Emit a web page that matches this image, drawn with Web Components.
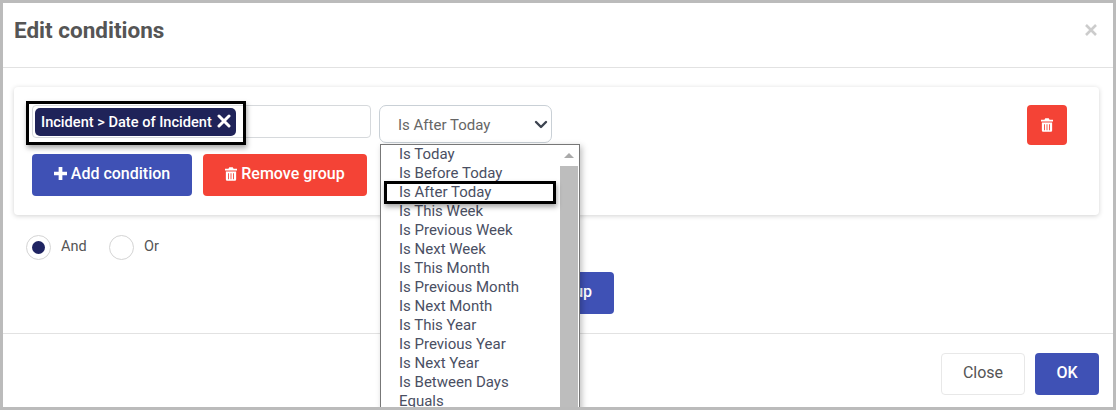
<!DOCTYPE html>
<html>
<head>
<meta charset="utf-8">
<title>Edit conditions</title>
<style>
  html, body { margin: 0; padding: 0; background: #fff; overflow: hidden; }
  body { font-family: Roboto, "Liberation Sans", sans-serif; }
</style>
</head>
<body>
<edit-dialog heading="Edit conditions">
  <condition-group></condition-group>
  <div slot="join" style="display:flex">
    <radio-option label="And" checked></radio-option>
    <radio-option label="Or"></radio-option>
  </div>
  <app-button slot="add" color="blue" style="width:135px" id="addGroup">Add group</app-button>
  <app-button slot="footer" color="plain" style="width:84px">Close</app-button>
  <app-button slot="footer" color="blue" style="width:64px">OK</app-button>
</edit-dialog>

<script>
const TRASH = /* html */`<svg viewBox="0 0 14 16" width="12" height="14" fill="currentColor" fill-rule="evenodd"><path d="M5 0h4l1 2h4v2H0V2h4zM1 5h12v9.500A1.500 1.500 0 0 1 11.500 16h-9A1.500 1.500 0 0 1 1 14.500zM3.500 7v7h1V7zM6.500 7v7h1V7zM9.500 7v7h1V7z"/></svg>`;
const PLUS = /* html */`<svg viewBox="0 0 14 14" width="13" height="13" fill="currentColor"><path d="M5 0h4v5h5v4H9v5H5V9H0V5h5z"/></svg>`;

class AppButton extends HTMLElement {
  constructor() {
    super();
    this.attachShadow({ mode: "open" });
  }

  connectedCallback() {
    this.shadowRoot.innerHTML = /* html */`
    <style>
      :host {
        display: inline-flex;
        align-items: center;
        justify-content: center;
        gap: 4px;
        box-sizing: border-box;
        height: 42px;
        padding-bottom: 3px;
        border-radius: 4px;
        font: 500 16px Roboto, sans-serif;
        color: #fff;
        cursor: pointer;
      }
      :host([color="blue"]) { background: #3f51b5; }
      :host([color="red"]) { background: #f44336; }
      :host([color="plain"]) {
        background: #fff;
        border: 1px solid #e8e8e8;
        color: #555;
        font-weight: 400;
      }
      ::slotted(svg) { flex: none; }
    </style>
    <slot></slot>`;
  }
}

class RadioOption extends HTMLElement {
  constructor() {
    super();
    this.attachShadow({ mode: "open" });
  }

  connectedCallback() {
    this.shadowRoot.innerHTML = /* html */`
    <style>
      :host {
        display: flex;
        align-items: center;
        gap: 10px;
        width: 83px;
        font: 400 14.5px Roboto, sans-serif;
        color: #555;
      }
      .circle {
        box-sizing: border-box;
        width: 25px;
        height: 25px;
        border: 1px solid #d4d4d4;
        border-radius: 50%;
        display: flex;
        align-items: center;
        justify-content: center;
      }
      .dot {
        width: 13px;
        height: 13px;
        border-radius: 50%;
        background: #1f2462;
      }
      .label { padding-bottom: 2px; }
    </style>
    <span class="circle">${this.hasAttribute("checked") ? '<span class="dot"></span>' : ""}</span>
    <span class="label">${this.getAttribute("label")}</span>`;
  }
}

class ConditionTag extends HTMLElement {
  constructor() {
    super();
    this.attachShadow({ mode: "open" });
  }

  connectedCallback() {
    this.shadowRoot.innerHTML = /* html */`
    <style>
      :host {
        display: inline-flex;
        align-items: center;
        gap: 5px;
        box-sizing: border-box;
        height: 28px;
        padding: 0 5px 0 6px;
        border-radius: 5px;
        background: #1f2359;
        color: #fff;
        font: 500 14.6px Roboto, sans-serif;
        white-space: nowrap;
      }
      svg { margin-top: -2px; }
    </style>
    <slot></slot>
    <svg viewBox="0 0 14 14" width="14" height="14" stroke="currentColor" stroke-width="3" stroke-linecap="round"><path d="M2 2l10 10M12 2L2 12"/></svg>`;
  }
}

class OptionMenu extends HTMLElement {
  constructor() {
    super();
    this.attachShadow({ mode: "open" });
  }

  static get items() {
    return ["Is Today", "Is Before Today", "Is After Today", "Is This Week", "Is Previous Week",
      "Is Next Week", "Is This Month", "Is Previous Month", "Is Next Month", "Is This Year",
      "Is Previous Year", "Is Next Year", "Is Between Days", "Equals"];
  }

  connectedCallback() {
    this.shadowRoot.innerHTML = /* html */`
    <style>
      :host {
        position: absolute;
        top: 39px;
        left: 1px;
        z-index: 5;
        display: flex;
        box-sizing: border-box;
        width: 200px;
        height: 290px;
        border: 1px solid #777;
        background: #fff;
        box-shadow: 2px 2px 6px rgba(0, 0, 0, .25);
        overflow: hidden;
        font: 400 15px Roboto, sans-serif;
        color: #4a4f63;
      }
      .list { flex: 1; min-width: 0; }
      .item {
        height: 19px;
        line-height: 19px;
        padding-left: 18px;
        white-space: nowrap;
      }
      .item.marked { position: relative; }
      .item.marked::after {
        content: "";
        position: absolute;
        left: 3px;
        top: -2px;
        width: 172px;
        height: 23px;
        box-sizing: border-box;
        border: 3px solid #000;
        box-shadow: 1px 3px 5px rgba(0, 0, 0, .35);
      }
      .bar {
        flex: none;
        width: 18px;
        margin-right: 1px;
        display: flex;
        flex-direction: column;
        align-items: center;
      }
      .arrow {
        flex: none;
        height: 21px;
        width: 100%;
        background: #fff;
        display: flex;
        align-items: center;
        justify-content: center;
      }
      .arrow i {
        border-left: 5px solid transparent;
        border-right: 5px solid transparent;
        border-bottom: 5px solid #aaa;
      }
      .thumb { flex: 1; width: 100%; background: #bdbdbd; }
    </style>
    <div class="list">
      ${OptionMenu.items.map(t => `<div class="item${t === "Is After Today" ? " marked" : ""}">${t}</div>`).join("")}
    </div>
    <div class="bar"><div class="arrow"><i></i></div><div class="thumb"></div></div>`;
  }
}

class SelectField extends HTMLElement {
  constructor() {
    super();
    this.attachShadow({ mode: "open" });
  }

  connectedCallback() {
    this.shadowRoot.innerHTML = /* html */`
    <style>
      :host {
        position: relative;
        display: block;
        flex: none;
        width: 173px;
        height: 38px;
      }
      .box {
        box-sizing: border-box;
        height: 100%;
        display: flex;
        align-items: center;
        justify-content: space-between;
        padding: 2px 3px 0 18px;
        border: 1px solid #c9d0d6;
        border-radius: 7px;
        font: 400 15px Roboto, sans-serif;
        color: #666;
      }
    </style>
    <div class="box">
      <span><slot></slot></span>
      <svg viewBox="0 0 14 10" width="14" height="10" fill="none" stroke="#3d4450" stroke-width="2.400" stroke-linecap="round" stroke-linejoin="round"><path d="M2 2l5 5 5-5"/></svg>
    </div>
    <option-menu></option-menu>`;
  }
}

class ConditionGroup extends HTMLElement {
  constructor() {
    super();
    this.attachShadow({ mode: "open" });
  }

  connectedCallback() {
    this.shadowRoot.innerHTML = /* html */`
    <style>
      :host {
        display: block;
        box-sizing: border-box;
        height: 128px;
        padding: 18px 32px 0 18px;
        background: #fff;
        border-radius: 4px;
        box-shadow: 0 1px 5px rgba(0, 0, 0, .18);
      }
      .row { display: flex; align-items: flex-start; }
      .input {
        box-sizing: border-box;
        width: 339px;
        height: 33px;
        margin-right: 8px;
        padding: 2px;
        border: 1px solid #d6d9dc;
        border-radius: 4px;
        position: relative;
      }
      .input::after {
        content: "";
        position: absolute;
        left: -7px;
        top: -5px;
        width: 220px;
        height: 44px;
        box-sizing: border-box;
        border: 3px solid #000;
        box-shadow: 1px 3px 5px rgba(0, 0, 0, .35);
        pointer-events: none;
      }
      .delete { margin-left: auto; width: 40px; height: 40px; padding-bottom: 0; }
      .actions { display: flex; gap: 11px; margin-top: 9px; }
    </style>
    <div class="row">
      <div class="input"><condition-tag>Incident &gt; Date of Incident</condition-tag></div>
      <select-field>Is After Today</select-field>
      <app-button class="delete" color="red">${TRASH}</app-button>
    </div>
    <div class="actions">
      <app-button color="blue" style="width:160px">${PLUS}Add condition</app-button>
      <app-button color="red" style="width:164px">${TRASH}Remove group</app-button>
    </div>`;
  }
}

class EditDialog extends HTMLElement {
  constructor() {
    super();
    this.attachShadow({ mode: "open" });
  }

  connectedCallback() {
    this.shadowRoot.innerHTML = /* html */`
    <style>
      :host {
        display: flex;
        flex-direction: column;
        box-sizing: border-box;
        width: 1116px;
        height: 410px;
        border: 3px solid #bbb;
        background: #fff;
        overflow: hidden;
      }
      header {
        flex: none;
        box-sizing: border-box;
        height: 65px;
        padding: 0 16px 10px 11px;
        display: flex;
        align-items: center;
        justify-content: space-between;
        border-bottom: 1px solid #e2e2e2;
      }
      h1 { margin: 0; font: 700 22.5px Roboto, sans-serif; color: #555; }
      .body {
        flex: none;
        box-sizing: border-box;
        height: 266px;
        padding: 19px 14px 0 11px;
        border-bottom: 1px solid #e2e2e2;
      }
      .join { margin: 20px 0 0 12px; }
      .add { display: flex; justify-content: center; margin-top: 12px; padding-right: 20px; }
      footer {
        flex: 1;
        padding: 19px 14px 0 0;
        display: flex;
        justify-content: flex-end;
        align-items: flex-start;
        gap: 10px;
      }
    </style>
    <header>
      <h1>${this.getAttribute("heading")}</h1>
      <svg viewBox="0 0 12 12" width="12" height="12" stroke="#ccc" stroke-width="2.600"><path d="M1 1l10 10M11 1L1 11"/></svg>
    </header>
    <div class="body">
      <slot></slot>
      <div class="join"><slot name="join"></slot></div>
      <div class="add"><slot name="add"></slot></div>
    </div>
    <footer><slot name="footer"></slot></footer>`;
  }
}

customElements.define("app-button", AppButton);
customElements.define("radio-option", RadioOption);
customElements.define("condition-tag", ConditionTag);
customElements.define("option-menu", OptionMenu);
customElements.define("select-field", SelectField);
customElements.define("condition-group", ConditionGroup);
customElements.define("edit-dialog", EditDialog);

document.getElementById("addGroup").insertAdjacentHTML("afterbegin", PLUS);
</script>
</body>
</html>
